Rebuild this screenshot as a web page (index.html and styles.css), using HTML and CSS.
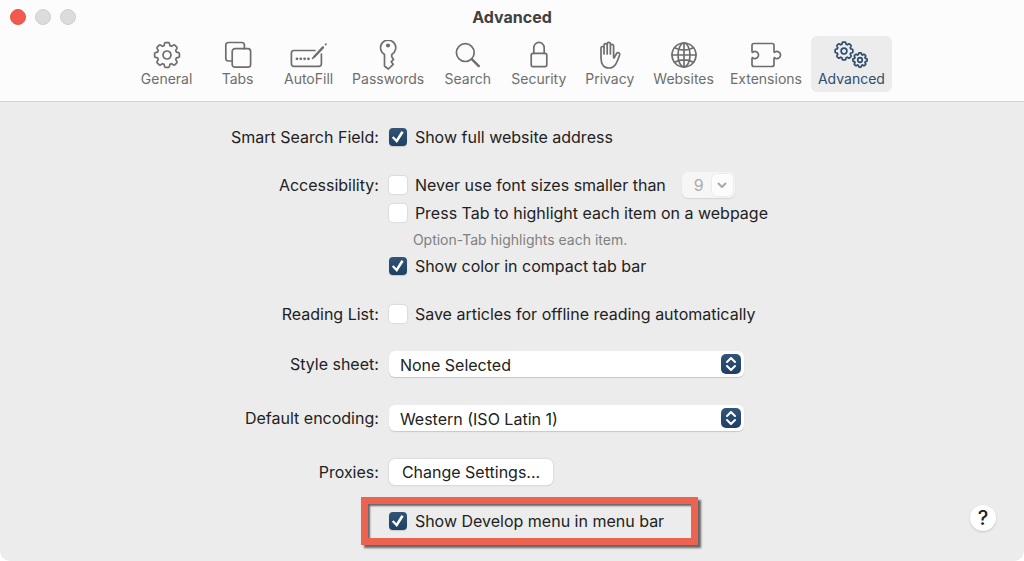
FILE: index.html
```
<!DOCTYPE html>
<html lang="en">
<head>
  <meta charset="UTF-8">
  <meta name="viewport" content="width=device-width, initial-scale=1.0">
  <title>Advanced</title>
  <link rel="stylesheet" href="styles.css">
</head>
<body>
  <!-- Shared gear shape -->
  <svg class="defs" width="0" height="0" aria-hidden="true">
    <symbol id="gear" viewBox="-14 -14 28 28" overflow="visible">
      <path vector-effect="non-scaling-stroke" d="M9.4-2.9L11.6-2.4Q12.4-2.2 12.4-1.4V1.4Q12.4 2.2 11.6 2.4L9.4 2.9L8.7 4.6L9.9 6.5Q10.3 7.2 9.8 7.8L7.8 9.8Q7.2 10.3 6.5 9.9L4.6 8.7L2.9 9.4L2.4 11.6Q2.2 12.4 1.4 12.4H-1.4Q-2.2 12.4-2.4 11.6L-2.9 9.4L-4.6 8.7L-6.5 9.9Q-7.2 10.3-7.8 9.8L-9.8 7.8Q-10.3 7.2-9.9 6.5L-8.7 4.6L-9.4 2.9L-11.6 2.4Q-12.4 2.2-12.4 1.4V-1.4Q-12.4-2.2-11.6-2.4L-9.4-2.9L-8.7-4.6L-9.9-6.5Q-10.3-7.2-9.8-7.8L-7.8-9.8Q-7.2-10.3-6.5-9.9L-4.6-8.7L-2.9-9.4L-2.4-11.6Q-2.2-12.4-1.4-12.4H1.4Q2.2-12.4 2.4-11.6L2.9-9.4L4.6-8.7L6.5-9.9Q7.2-10.3 7.8-9.8L9.8-7.8Q10.3-7.2 9.9-6.5L8.7-4.6Z"/>
      <circle vector-effect="non-scaling-stroke" r="4"/>
    </symbol>
  </svg>

  <div class="window">
    <header class="header">
      <div class="titlebar">
        <div class="lights">
          <button class="light close" aria-label="Close"></button>
          <button class="light" aria-label="Minimize" disabled></button>
          <button class="light" aria-label="Zoom" disabled></button>
        </div>
        <h1>Advanced</h1>
      </div>

      <nav class="toolbar">
        <button class="tab">
          <svg class="icon" viewBox="-20 -15 40 30"><use href="#gear" x="-14" y="-14" width="28" height="28"/></svg>
          General
        </button>
        <button class="tab">
          <svg class="icon" viewBox="-20 -15 40 30">
            <path d="M-6 6H-9.5A2.7 2.7 0 0 1-12.2 3.3V-9.8A2.7 2.7 0 0 1-9.5-12.5H3.7A2.7 2.7 0 0 1 6.4-9.8V-6.3"/>
            <rect x="-5.800" y="-6.300" width="18.400" height="18.400" rx="2.700"/>
          </svg>
          Tabs
        </button>
        <button class="tab">
          <svg class="icon" viewBox="-20 -15 40 30">
            <path d="M6-4.5H-15.2A2.4 2.4 0 0 0-17.6-2.1V9A2.4 2.4 0 0 0-15.2 11.4H10A2.4 2.4 0 0 0 12.4 9V-1"/>
            <path class="thick" d="M5.5 1.5L14-7.6"/>
            <path d="M3.6 3.4L6 1M16.5-10.3L17-10.8"/>
            <g class="solid"><circle cx="-12" cy="3.8" r="1.4"/><circle cx="-8.2" cy="3.8" r="1.4"/><circle cx="-4.4" cy="3.8" r="1.4"/><circle cx="-.6" cy="3.8" r="1.4"/></g>
          </svg>
          AutoFill
        </button>
        <button class="tab">
          <svg class="icon" viewBox="-20 -15 40 30">
            <path d="M-3.5-.6A7.6 7.6 0 1 1 3.8-.6V2L5.5 4.3L3.2 6.800L5.2 9.3L.4 14L-3.5 11Z"/>
            <circle class="solid" cx="0" cy="-9.5" r="2.1"/>
          </svg>
          Passwords
        </button>
        <button class="tab">
          <svg class="icon" viewBox="-20 -15 40 30">
            <circle cx="-2.7" cy="-2.4" r="8.9"/>
            <path class="thick" d="M4 4.3L10.8 11.1"/>
          </svg>
          Search
        </button>
        <button class="tab">
          <svg class="icon" viewBox="-20 -15 40 30">
            <rect x="-7.8" y="-1.6" width="15.6" height="13.2" rx="1.8"/>
            <path d="M-5.2-1.6V-7A5.2 5.6 0 0 1 5.2-7V-1.6"/>
          </svg>
          Security
        </button>
        <button class="tab">
          <svg class="icon" viewBox="-20 -15 40 30">
            <path d="M-6-1V-7A1.5 1.5 0 0 0-9-7V3C-9 9.5-6 13-1 13C1.5 13 4 12 6 8.7C7.5 6 8.5 3 9.7-.2A1.7 1.7 0 0 0 6.6-1.5L4 3L3.6 2.5V-9A1.6 1.6 0 0 0 .4-9V-1M-6-7V-9.8A1.6 1.6 0 0 1-2.8-9.8V-1M-2.8-9.8V-11A1.6 1.6 0 0 1 .4-11V-8"/>
          </svg>
          Privacy
        </button>
        <button class="tab">
          <svg class="icon" viewBox="-20 -15 40 30">
            <circle r="12"/>
            <ellipse rx="6" ry="12"/>
            <path d="M0-12V12M-12 0H12M-9.5-7.3Q0-2.5 9.5-7.3M-9.5 7.3Q0 2.5 9.5 7.3"/>
          </svg>
          Websites
        </button>
        <button class="tab">
          <svg class="icon" viewBox="-20 -15 40 30">
            <path d="M-12-11.500H6A2 2 0 0 1 8-9.500V-4C8-2.300 8.700-2.400 9.300-3.200A3.600 3.600 0 1 1 9.300 3.200C8.700 2.400 8 2.300 8 4V9.500A2 2 0 0 1 6 11.500H-12A2 2 0 0 1-14 9.500V4C-14 2.300-13.300 2.400-12.700 3.200A3.600 3.600 0 1 0-12.700-3.200C-13.300-2.400-14-2.300-14-4V-9.500A2 2 0 0 1-12-11.500Z"/>
          </svg>
          Extensions
        </button>
        <button class="tab active" aria-current="page">
          <svg class="icon" viewBox="-20 -15 40 30">
            <use href="#gear" x="-17" y="-14" width="20" height="20"/>
            <use href="#gear" x="1" y="-3" width="16" height="16"/>
          </svg>
          Advanced
        </button>
      </nav>
    </header>

    <main class="settings">
      <div class="row">
        <span class="name">Smart Search Field:</span>
        <div class="controls">
          <label class="check"><input type="checkbox" checked>Show full website address</label>
        </div>
      </div>

      <div class="row">
        <span class="name">Accessibility:</span>
        <div class="controls">
          <div class="line">
            <label class="check"><input type="checkbox">Never use font sizes smaller than</label>
            <div class="combo">
              <input type="text" value="9" aria-label="Minimum font size" disabled>
              <button aria-label="Choose font size" disabled>
                <svg width="10" height="6" viewBox="0 0 10 6"><path d="M1 1L5 5L9 1"/></svg>
              </button>
            </div>
          </div>
          <label class="check"><input type="checkbox">Press Tab to highlight each item on a webpage</label>
          <p class="hint">Option-Tab highlights each item.</p>
          <label class="check"><input type="checkbox" checked>Show color in compact tab bar</label>
        </div>
      </div>

      <div class="row">
        <span class="name">Reading List:</span>
        <div class="controls">
          <label class="check"><input type="checkbox">Save articles for offline reading automatically</label>
        </div>
      </div>

      <div class="row popup-row">
        <label class="name" for="style-sheet">Style sheet:</label>
        <div class="popup">
          <select id="style-sheet"><option>None Selected</option></select>
          <svg class="arrows" viewBox="0 0 20 20"><path d="M6 8L10 4L14 8M6 12L10 16L14 12"/></svg>
        </div>
      </div>

      <div class="row popup-row">
        <label class="name" for="encoding">Default encoding:</label>
        <div class="popup">
          <select id="encoding"><option>Western (ISO Latin 1)</option></select>
          <svg class="arrows" viewBox="0 0 20 20"><path d="M6 8L10 4L14 8M6 12L10 16L14 12"/></svg>
        </div>
      </div>

      <div class="row">
        <span class="name">Proxies:</span>
        <div class="controls">
          <button class="push">Change Settings...</button>
        </div>
      </div>

      <div class="row last">
        <div class="highlight">
          <label class="check"><input type="checkbox" checked>Show Develop menu in menu bar</label>
        </div>
        <button class="help" aria-label="Help">?</button>
      </div>
    </main>
  </div>
</body>
</html>
```
FILE: styles.css
```
* {
  box-sizing: border-box;
}

body {
  margin: 0;
  background: #fff;
  color: #222;
  font-family: Inter, "Liberation Sans", sans-serif;
  font-size: 16px;
}

button,
input,
select {
  margin: 0;
  padding: 0;
  border: 0;
  color: inherit;
  font: inherit;
}

.defs {
  position: absolute;
}

.window {
  min-height: 100vh;
  background: #ececec;
  border-radius: 0 0 10px 10px;
}

/* Title bar and toolbar */
.header {
  padding-bottom: 9px;
  background: #fcfcfc;
  border-bottom: 1px solid #d2d2d2;
}

.titlebar {
  display: grid;
  grid-template-columns: 1fr auto 1fr;
  align-items: center;
  height: 36px;
  padding: 0 10px 2px;
}

.lights {
  display: flex;
  gap: 9px;
}

.light {
  width: 16px;
  height: 16px;
  background: #dcdcdc;
  border: 1px solid #d0d0d0;
  border-radius: 50%;
}

.light.close {
  background: #f2594f;
  border-color: #e2564c;
}

h1 {
  margin: 0;
  color: #404040;
  font-size: 16px;
  font-weight: 700;
}

.toolbar {
  display: flex;
  justify-content: center;
  gap: 2px;
}

.tab {
  display: flex;
  flex-direction: column;
  align-items: center;
  min-width: 69px;
  height: 56px;
  padding: 4px 7px;
  background: none;
  border-radius: 6px;
  color: #6e6e6e;
  font-size: 14px;
  line-height: 18px;
}

.tab.active {
  background: #ececec;
  color: #2f4d6e;
}

.icon {
  width: 40px;
  height: 30px;
  fill: none;
  stroke: currentColor;
  stroke-width: 1.7;
  stroke-linecap: round;
  stroke-linejoin: round;
}

.icon .thick {
  stroke-width: 2.4;
}

.icon .solid {
  fill: currentColor;
  stroke: none;
}

/* Settings */
.settings {
  padding: 21px 0 12px;
}

.row {
  display: grid;
  grid-template-columns: 37% 1fr;
  column-gap: 10px;
  margin-bottom: 20px;
  line-height: 28px;
}

.popup-row {
  margin: 22px 0 26px;
}

.name {
  text-align: right;
}

.line {
  display: flex;
  align-items: center;
  gap: 16px;
}

.check {
  display: flex;
  align-items: center;
  gap: 8px;
}

.check input {
  appearance: none;
  display: grid;
  place-items: center;
  width: 18px;
  height: 18px;
  background: #fff;
  border-radius: 4px;
  box-shadow: 0 0 1px 1px #dcdcdc;
}

.check input:checked {
  background: linear-gradient(#315477, #1f4064);
  box-shadow: 0 1px 1px #c4c8cc;
}

.check input:checked::before {
  content: "";
  width: 12px;
  height: 12px;
  background: #fff;
  clip-path: polygon(0 56%, 14% 44%, 37% 68%, 80% 0, 98% 12%, 42% 100%);
}

.hint {
  margin: 0 0 0 24px;
  color: #808080;
  font-size: 14px;
  line-height: 25px;
}

.combo {
  display: flex;
  align-items: center;
  width: 53px;
  height: 26px;
  padding-right: 2px;
  background: #f6f6f6;
  border-radius: 6px;
  box-shadow: 0 1px 1px #d4d4d4;
}

.combo input {
  flex: 1;
  min-width: 0;
  height: 26px;
  padding-left: 4px;
  background: none;
  color: #acacac;
  text-align: center;
}

.combo button {
  display: grid;
  place-items: center;
  width: 21px;
  height: 22px;
  background: #fcfcfc;
  border-radius: 5px;
  box-shadow: 0 0 1px 1px #ececec;
}

.combo path {
  fill: none;
  stroke: #a8a8a8;
  stroke-width: 2;
}

.popup {
  display: grid;
  align-items: center;
  width: 355px;
  height: 28px;
}

.popup select,
.popup .arrows {
  grid-area: 1 / 1;
}

.popup select {
  appearance: none;
  height: 26px;
  padding: 0 32px 0 11px;
  background: #fff;
  border-radius: 6px;
  box-shadow: 0 1px 1px #c8c8c8;
}

.arrows {
  justify-self: end;
  width: 20px;
  height: 20px;
  margin-right: 3px;
  background: linear-gradient(#315477, #1f4064);
  border-radius: 5px;
  fill: none;
  stroke: #fff;
  stroke-width: 2;
  stroke-linecap: round;
  stroke-linejoin: round;
  pointer-events: none;
}

.push {
  height: 26px;
  padding: 0 13px;
  background: #fff;
  border-radius: 6px;
  box-shadow: 0 0 1px 1px #dedede, 0 1px 1px #c8c8c8;
  line-height: 26px;
}

.last {
  grid-template-columns: 37% auto 1fr;
  align-items: start;
  margin: -9px 0 0;
}

.highlight {
  grid-column: 2;
  margin-left: -28px;
  padding: 3px 27px 3px 21px;
  border: 7px solid #ec6352;
  box-shadow: 3px 3px 2px #666, inset 2px 2px 2px #666;
}

.help {
  justify-self: end;
  width: 26px;
  height: 26px;
  margin: 8px 28px 0 0;
  background: #fff;
  border-radius: 50%;
  box-shadow: 0 1px 2px #c4c4c4;
  font-size: 20px;
  font-weight: 500;
  line-height: 26px;
}
```
